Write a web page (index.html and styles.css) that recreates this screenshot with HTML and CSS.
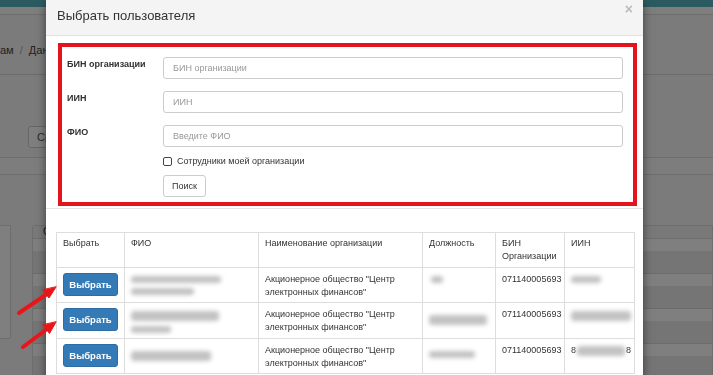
FILE: index.html
```html
<!DOCTYPE html>
<html lang="ru">
<head>
    <meta charset="UTF-8" />
    <title>Выбрать пользователя</title>
    <link rel="stylesheet" href="styles.css">
</head>
<body>
    <!-- page behind the dialog -->
    <div class="page">
        <div class="topbar"></div>
        <div class="tabs"></div>
        <div class="crumbs">ам <span class="sep">/</span> Данные пользователей</div>
        <div class="toolbar">
            <button class="btn-ghost">Сразу</button>
        </div>
        <div class="filters"></div>
        <div class="panels">
            <div class="panel panel-side"></div>
            <div class="panel panel-main">
                <div class="panel-title">Список</div>
                <div class="list-row"></div>
                <div class="list-row"></div>
                <div class="list-row"></div>
                <div class="list-row"></div>
            </div>
        </div>
    </div>

    <div class="backdrop"></div>

    <div class="modal">
        <div class="modal-header">
            <h4 class="modal-title">Выбрать пользователя</h4>
            <span class="close">×</span>
        </div>

        <div class="modal-body">
            <div class="search-box">
                <div class="field">
                    <label>БИН организации</label>
                    <input type="text" placeholder="БИН организации">
                </div>
                <div class="field">
                    <label>ИИН</label>
                    <input type="text" placeholder="ИИН">
                </div>
                <div class="field">
                    <label>ФИО</label>
                    <input type="text" placeholder="Введите ФИО">
                </div>
                <div class="check-row">
                    <span class="check"></span>
                    <span>Сотрудники моей организации</span>
                </div>
                <div class="submit-row">
                    <button class="btn-default">Поиск</button>
                </div>
            </div>
        </div>

        <div class="results">
            <table class="users">
                <colgroup>
                    <col class="c-pick">
                    <col class="c-fio">
                    <col class="c-org">
                    <col class="c-pos">
                    <col class="c-bin">
                    <col class="c-iin">
                </colgroup>
                <thead>
                    <tr>
                        <th>Выбрать</th>
                        <th>ФИО</th>
                        <th>Наименование организации</th>
                        <th>Должность</th>
                        <th>БИН Организации</th>
                        <th>ИИН</th>
                    </tr>
                </thead>
                <tbody>
                    <tr>
                        <td><button class="btn-primary">Выбрать</button></td>
                        <td><span class="blur w90"></span><span class="blur w63"></span></td>
                        <td>Акционерное общество "Центр электронных финансов"</td>
                        <td><span class="blur w12 ml"></span></td>
                        <td>071140005693</td>
                        <td><span class="blur w30"></span></td>
                    </tr>
                    <tr>
                        <td><button class="btn-primary">Выбрать</button></td>
                        <td><span class="blur w88 thick"></span><span class="blur w40"></span></td>
                        <td>Акционерное общество "Центр электронных финансов"</td>
                        <td><span class="blur w58 thick down"></span></td>
                        <td>071140005693</td>
                        <td><span class="blur w60 thick"></span></td>
                    </tr>
                    <tr>
                        <td><button class="btn-primary">Выбрать</button></td>
                        <td><span class="blur w80 thick down"></span></td>
                        <td>Акционерное общество "Центр электронных финансов"</td>
                        <td><span class="blur w46 down"></span></td>
                        <td>071140005693</td>
                        <td class="iin-mask">8<span class="blur w48 thick"></span>8</td>
                    </tr>
                </tbody>
            </table>
        </div>
    </div>

    <!-- annotation arrows -->
    <svg class="arrows" width="713" height="375" viewBox="0 0 713 375">
        <g stroke="#e8161b" stroke-width="4" stroke-linecap="round" fill="#e8161b">
            <line x1="19" y1="313" x2="47" y2="294" />
            <polygon points="56,287 49,298 43,290" stroke-width="1" />
            <line x1="23" y1="347" x2="47" y2="329" />
            <polygon points="56,322 49.5,333.5 43,325" stroke-width="1" />
        </g>
    </svg>
</body>
</html>
```

FILE: styles.css
```css
body {
    margin: 0;
    overflow: hidden;
    font-family: 'Liberation Sans', Arial, sans-serif;
    color: #333;
    background: #f6f6f6;
}

/* background page */
.page {
    height: 375px;
}

.topbar {
    height: 7px;
    background: #56b6c2;
}

.tabs {
    height: 7px;
    background: #fdfdfd;
    border-bottom: 1px solid #dcdcdc;
}

.crumbs {
    height: 60px;
    box-sizing: border-box;
    padding-top: 29px;
    border-bottom: 1px solid #d6d6d6;
    font-size: 11px;
    color: #444;
    white-space: nowrap;
}

.crumbs .sep {
    color: #aaa;
    margin: 0 3px;
}

.toolbar {
    height: 82px;
    box-sizing: border-box;
    padding: 51px 0 0 28px;
}

.btn-ghost {
    height: 22px;
    padding: 0 8px;
    border: 1px solid #ccc;
    border-radius: 3px;
    background: #fff;
    font-family: inherit;
    font-size: 11px;
    color: #555;
}

.filters {
    height: 16px;
    border-top: 1px solid #dadada;
    border-bottom: 1px solid #dadada;
    background: #fbfbfb;
}

.panels {
    display: flex;
    gap: 21px;
    margin-top: 50px;
}

.panel {
    background: #fff;
    border: 1px solid #ddd;
}

.panel-side {
    width: 12px;
    height: 112px;
    margin-left: -2px;
    border-left: none;
    border-radius: 0 0 3px 0;
}

.panel-main {
    flex: 1;
    border-radius: 3px 0 0 0;
}

.panel-title {
    height: 12px;
    padding-left: 10px;
    font-size: 10px;
    line-height: 12px;
    background: #f3f3f3;
    border-bottom: 1px solid #ddd;
}

.list-row {
    height: 22px;
    border-top: 12px solid #fff;
    background: #eaeaea;
    border-bottom: 1px solid #d8d8d8;
}

.backdrop {
    position: fixed;
    inset: 0;
    background: rgba(0, 0, 0, 0.5);
}

/* dialog */
.modal {
    position: absolute;
    top: 0;
    left: 46px;
    width: 597px;
    height: 420px;
    background: #fff;
    box-shadow: 0 3px 9px rgba(0, 0, 0, 0.5);
}

.modal-header {
    display: flex;
    justify-content: space-between;
    align-items: flex-start;
    height: 36px;
    box-sizing: border-box;
    padding: 8px 10px 0 11px;
    background: #f4f4f4;
    border-bottom: 1px solid #e2e2e2;
}

.modal-title {
    margin: 0;
    font-size: 13px;
    font-weight: normal;
    line-height: 15px;
}

.close {
    font-size: 14px;
    font-weight: bold;
    line-height: 8px;
    margin-top: -3px;
    color: #bbb;
}

.modal-body {
    padding: 7px 6px 2px 12px;
    border-bottom: 1px solid #e5e5e5;
}

.search-box {
    border: 4px solid #e3141b;
    padding: 10px 10px 5px 5px;
}

.field {
    display: flex;
    margin-bottom: 12px;
}

.field label {
    width: 96px;
    flex: none;
    padding-top: 2px;
    font-size: 9px;
    font-weight: bold;
    color: #333;
}

.field input {
    flex: 1;
    height: 22px;
    box-sizing: border-box;
    padding: 0 9px;
    border: 1px solid #ccc;
    border-radius: 3px;
    font-family: inherit;
    font-size: 9px;
    color: #333;
}

.field input::placeholder {
    color: #999;
}

.check-row {
    display: flex;
    align-items: center;
    gap: 5px;
    margin: -3px 0 9px 96px;
    font-size: 9px;
    color: #333;
}

.check {
    width: 7px;
    height: 7px;
    border: 1px solid #444;
    border-radius: 2px;
}

.submit-row {
    padding-left: 96px;
}

.btn-default {
    height: 22px;
    padding: 0 8px;
    border: 1px solid #ccc;
    border-radius: 3px;
    background: #fff;
    font-family: inherit;
    font-size: 9px;
    color: #333;
}

/* results table */
.results {
    padding: 23px 10px 0;
}

.users {
    width: 578px;
    table-layout: fixed;
    border-collapse: collapse;
    font-size: 9px;
    line-height: 13px;
    color: #333;
}

.c-pick { width: 68px; }
.c-fio { width: 134px; }
.c-org { width: 164px; }
.c-pos { width: 73px; }
.c-bin { width: 69px; }
.c-iin { width: 70px; }

.users tr {
    height: 35px;
}

.users th,
.users td {
    border: 1px solid #ddd;
    padding: 4px 5px 0 6px;
    text-align: left;
    vertical-align: top;
    font-weight: normal;
}

.users td {
    padding-top: 5px;
}

.btn-primary {
    display: block;
    width: 55px;
    height: 23px;
    padding: 0;
    border: 1px solid #2e6da4;
    border-radius: 3px;
    background: #337ab7;
    color: #fff;
    font-family: inherit;
    font-size: 9.5px;
    font-weight: bold;
}

.blur {
    display: block;
    height: 7px;
    margin: 3px 0 5px;
    border-radius: 3px;
    background: #c2c2c2;
    filter: blur(2px);
}

.blur.thick { height: 10px; }
.blur.down { margin-top: 7px; }
.blur.ml { margin-left: 2px; }

.w12 { width: 12px; }
.w30 { width: 30px; }
.w40 { width: 40px; }
.w46 { width: 46px; }
.w48 { width: 48px; }
.w58 { width: 58px; }
.w60 { width: 60px; }
.w63 { width: 63px; }
.w80 { width: 80px; }
.w88 { width: 88px; }
.w90 { width: 90px; }

.iin-mask {
    white-space: nowrap;
}

.iin-mask .blur {
    display: inline-block;
    vertical-align: middle;
    margin: 0 1px;
}

.arrows {
    position: absolute;
    top: 0;
    left: 0;
    pointer-events: none;
}
```
